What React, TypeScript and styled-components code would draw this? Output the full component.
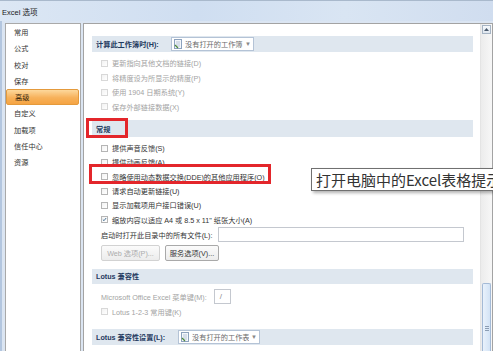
import React from "react";
import styled, { createGlobalStyle } from "styled-components";

const GlobalStyle = createGlobalStyle`
  html, body {
    margin: 0;
    padding: 0;
  }
  body {
    font-family: "Liberation Sans", "Noto Sans CJK SC", sans-serif;
    font-size: 7.2px;
    color: #2a2a2a;
  }
`;

const Window = styled.div`
  position: relative;
  width: 493px;
  height: 351px;
  overflow: hidden;
  display: flex;
  flex-direction: column;
  background: linear-gradient(90deg, #b3c6df 0, #b3c6df 2px, #dbe5f2 2px);
`;

const TitleBar = styled.div`
  height: 21px;
  flex: none;
  box-sizing: border-box;
  border-top: 1px solid #a9b9cc;
  display: flex;
  align-items: center;
  padding-left: 2px;
  font-size: 7.5px;
  color: #1a1a1a;
  background: linear-gradient(90deg, #dce7f4 0%, #cfdef1 40%, #d9e5f3 70%, #d0ddef 100%);
`;

const Body = styled.div`
  flex: 1;
  min-height: 0;
  display: flex;
  gap: 2px;
  padding: 2px 0 0 5px;
`;

const Nav = styled.div`
  width: 76px;
  flex: none;
  box-sizing: border-box;
  border: 1px solid #a9a9a9;
  border-bottom: none;
  background: #fff;
  display: flex;
  flex-direction: column;
`;

const NavItem = styled.div<{ $active?: boolean }>`
  height: 16.25px;
  display: flex;
  align-items: center;
  padding-left: 8px;
  margin-right: 1px;
  box-sizing: border-box;
  color: #333;
  border-radius: 2px;
  ${(p) =>
    p.$active &&
    `
    background: linear-gradient(#fdd89c, #f7b15a 55%, #f5a443);
    border: 1px solid #e49a3c;
    color: #3a2a10;
  `}
`;

const Panel = styled.div`
  flex: 1;
  min-width: 0;
  box-sizing: border-box;
  border: 1px solid #a3a3a3;
  border-bottom: none;
  background: #fff;
  display: flex;
`;

const Content = styled.div`
  flex: 1;
  min-width: 0;
  padding: 12px 7px 0 8px;
  display: flex;
  flex-direction: column;
`;

const Band = styled.div<{ $h: number; $mt?: number }>`
  height: ${(p) => p.$h}px;
  margin-top: ${(p) => p.$mt ?? 0}px;
  flex: none;
  background: #dfe7ef;
  display: flex;
  align-items: center;
  padding-left: 4px;
  font-weight: bold;
  color: #1f3a60;
`;

const BandLabel = styled.span<{ $w?: number }>`
  width: ${(p) => (p.$w ? `${p.$w}px` : "auto")};
  flex: none;
`;

const Dropdown = styled.div<{ $w: number }>`
  width: ${(p) => p.$w}px;
  height: 14px;
  box-sizing: border-box;
  border: 1px solid #b4c3d6;
  background: #fff;
  display: flex;
  align-items: center;
  font-weight: normal;
  color: #6a6a6a;
`;

const DropIcon = styled.span`
  width: 13px;
  display: flex;
  align-items: center;
  justify-content: center;
`;

const DropText = styled.span`
  flex: 1;
  white-space: nowrap;
  overflow: hidden;
`;

const DropArrow = styled.span`
  width: 10px;
  height: 100%;
  display: flex;
  align-items: center;
  justify-content: center;
  font-size: 6px;
  color: #888;
`;

const Row = styled.div<{ $h: number; $mt?: number; $muted?: boolean }>`
  height: ${(p) => p.$h}px;
  margin-top: ${(p) => p.$mt ?? 0}px;
  flex: none;
  display: flex;
  align-items: center;
  gap: 4px;
  padding-left: 9px;
  white-space: nowrap;
  color: ${(p) => (p.$muted ? "#a3a3a3" : "#333")};
`;

const Box = styled.span<{ $muted?: boolean }>`
  width: 7px;
  height: 7px;
  flex: none;
  box-sizing: border-box;
  border: 1px solid ${(p) => (p.$muted ? "#d8d8d8" : "#b5b5b5")};
  background: linear-gradient(135deg, #f2f2f2, #fff);
  display: flex;
  align-items: center;
  justify-content: center;
`;

const TextInput = styled.div<{ $w: number; $ml: number }>`
  width: ${(p) => p.$w}px;
  height: 15px;
  margin-left: ${(p) => p.$ml}px;
  box-sizing: border-box;
  border: 1px solid #c4c8cf;
  background: #fff;
  display: flex;
  align-items: center;
  padding-left: 5px;
  color: #8a8a8a;
  font-size: 8px;
`;

const Button = styled.div<{ $w: number; $disabled?: boolean }>`
  width: ${(p) => p.$w}px;
  height: 16px;
  box-sizing: border-box;
  border: 1px solid ${(p) => (p.$disabled ? "#d2d2d2" : "#a9a9a9")};
  border-radius: 2px;
  background: linear-gradient(#fbfbfb, #ececec);
  display: flex;
  align-items: center;
  justify-content: center;
  color: ${(p) => (p.$disabled ? "#ababab" : "#333")};
`;

const ButtonRow = styled.div`
  height: 16px;
  margin-top: 2px;
  flex: none;
  display: flex;
  gap: 5px;
  padding-left: 9px;
`;

const Scrollbar = styled.div`
  width: 12px;
  flex: none;
  box-sizing: border-box;
  border-left: 1px solid #e4e4e4;
  background: linear-gradient(90deg, #ececec, #f7f7f7);
  display: flex;
  flex-direction: column;
  align-items: center;
`;

const ScrollArrow = styled.div`
  width: 9px;
  height: 9px;
  margin-top: 1px;
  box-sizing: border-box;
  border: 1px solid #a6b4c4;
  background: linear-gradient(#f6f9fc, #dfe6ee);
  display: flex;
  align-items: center;
  justify-content: center;
`;

const Thumb = styled.div`
  margin-top: auto;
  width: 9px;
  height: 68px;
  box-sizing: border-box;
  border: 1px solid #a4bad6;
  border-bottom: none;
  border-radius: 2px 2px 0 0;
  background: linear-gradient(90deg, #e9f2fc, #d3e3f5);
  display: flex;
  justify-content: center;
`;

const Grip = styled.div`
  margin-top: 42px;
  width: 4px;
  height: 5px;
  background: repeating-linear-gradient(#8b9db3 0 1px, transparent 1px 2px);
`;

const Tooltip = styled.div`
  position: absolute;
  left: 311px;
  top: 168px;
  height: 23px;
  box-sizing: border-box;
  border: 1px solid #707070;
  background: #fff;
  box-shadow: 2px 2px 3px rgba(0, 0, 0, 0.3);
  padding: 0 4px;
  display: flex;
  align-items: center;
  white-space: nowrap;
  font-family: "Noto Sans CJK SC", "Liberation Sans", sans-serif;
  font-size: 15px;
  color: #333;
`;

const Mark = styled.div<{ $x: number; $y: number; $w: number; $h: number }>`
  position: absolute;
  left: ${(p) => p.$x}px;
  top: ${(p) => p.$y}px;
  width: ${(p) => p.$w}px;
  height: ${(p) => p.$h}px;
  box-sizing: border-box;
  border: 3px solid #e3262b;
`;

const SheetIcon = () => (
  <svg width="9" height="10" viewBox="0 0 9 10">
    <rect x="0.5" y="0.5" width="7" height="9" fill="#f4f7fb" stroke="#8da2bd" />
    <path d="M2 3h4M2 5h4M2 7h4" stroke="#a9b9cf" strokeWidth="0.8" />
    <path d="M1 6l3 3" stroke="#4f8a3c" strokeWidth="1.2" />
  </svg>
);

const Check = () => (
  <svg width="7" height="7" viewBox="0 0 7 7">
    <path d="M1.2 3.6 L2.8 5.2 L5.8 1.4" fill="none" stroke="#2f5f86" strokeWidth="1.2" />
  </svg>
);

const CheckRow: React.FC<{
  label: string;
  h: number;
  mt?: number;
  muted?: boolean;
  checked?: boolean;
}> = ({ label, h, mt, muted, checked }) => (
  <Row $h={h} $mt={mt} $muted={muted}>
    <Box $muted={muted}>{checked && <Check />}</Box>
    {label}
  </Row>
);

const navItems = ["常用", "公式", "校对", "保存", "高级", "自定义", "加载项", "信任中心", "资源"];

const calcItems = [
  "更新指向其他文档的链接(D)",
  "将精度设为所显示的精度(P)",
  "使用 1904 日期系统(Y)",
  "保存外部链接数据(X)",
];

const generalItems: { label: string; checked?: boolean }[] = [
  { label: "提供声音反馈(S)" },
  { label: "提供动画反馈(A)" },
  { label: "忽略使用动态数据交换(DDE)的其他应用程序(O)" },
  { label: "请求自动更新链接(U)" },
  { label: "显示加载项用户接口错误(U)" },
  { label: "缩放内容以适应 A4 或 8.5 x 11\" 纸张大小(A)", checked: true },
];

export default function App() {
  return (
    <>
      <GlobalStyle />
      <Window>
        <TitleBar>Excel 选项</TitleBar>
        <Body>
          <Nav>
            {navItems.map((n) => (
              <NavItem key={n} $active={n === "高级"}>
                {n}
              </NavItem>
            ))}
          </Nav>
          <Panel>
            <Content>
              <Band $h={16}>
                <BandLabel $w={75}>计算此工作簿时(H):</BandLabel>
                <Dropdown $w={83}>
                  <DropIcon>
                    <SheetIcon />
                  </DropIcon>
                  <DropText>没有打开的工作簿</DropText>
                  <DropArrow>▼</DropArrow>
                </Dropdown>
              </Band>
              {calcItems.map((t, i) => (
                <CheckRow key={t} label={t} h={14.5} mt={i === 0 ? 4 : 0} muted />
              ))}

              <Band $h={17} $mt={6}>
                <BandLabel>常规</BandLabel>
              </Band>
              {generalItems.map((it, i) => (
                <CheckRow
                  key={it.label}
                  label={it.label}
                  h={14.3}
                  mt={i === 0 ? 4 : 0}
                  checked={it.checked}
                />
              ))}
              <Row $h={16}>
                启动时打开此目录中的所有文件(L):
                <TextInput $w={246} $ml={2} />
              </Row>
              <ButtonRow>
                <Button $w={59} $disabled>
                  Web 选项(P)...
                </Button>
                <Button $w={54}>服务选项(V)...</Button>
              </ButtonRow>

              <Band $h={15} $mt={8}>
                <BandLabel>Lotus 兼容性</BandLabel>
              </Band>
              <Row $h={16} $mt={5} $muted>
                Microsoft Office Excel 菜单键(M):
                <TextInput $w={17} $ml={3}>/</TextInput>
              </Row>
              <CheckRow label="Lotus 1-2-3 常用键(K)" h={14} muted />

              <Band $h={16} $mt={10}>
                <BandLabel $w={82}>Lotus 兼容性设置(L):</BandLabel>
                <Dropdown $w={82}>
                  <DropIcon>
                    <SheetIcon />
                  </DropIcon>
                  <DropText>没有打开的工作表</DropText>
                  <DropArrow>▼</DropArrow>
                </Dropdown>
              </Band>
            </Content>
            <Scrollbar>
              <ScrollArrow>
                <svg width="5" height="3" viewBox="0 0 5 3">
                  <path d="M0 3 L2.5 0 L5 3Z" fill="#4a5a6e" />
                </svg>
              </ScrollArrow>
              <Thumb>
                <Grip />
              </Thumb>
            </Scrollbar>
          </Panel>
        </Body>
        <Mark $x={86} $y={118} $w={42} $h={20} />
        <Mark $x={89} $y={164} $w={182} $h={20} />
        <Tooltip>打开电脑中的Excel表格提示</Tooltip>
      </Window>
    </>
  );
}
